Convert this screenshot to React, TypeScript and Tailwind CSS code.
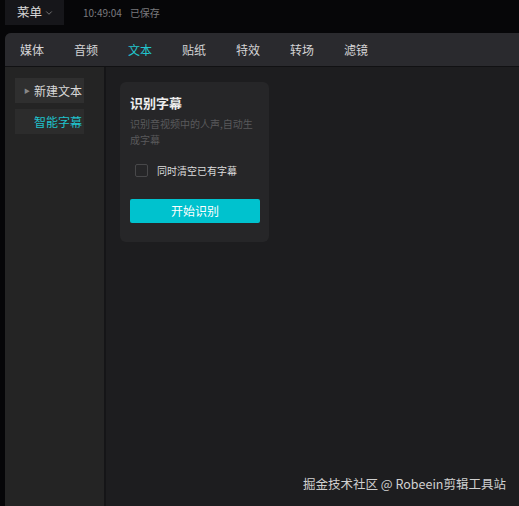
import { ChevronDown } from 'lucide-react';

const tabs = ['媒体', '音频', '文本', '贴纸', '特效', '转场', '滤镜'];

export default function App() {
  return (
    <div
      className="relative flex h-[506px] w-[519px] flex-col overflow-hidden bg-[#060608] text-white"
      style={{ fontFamily: '"Noto Sans CJK SC", "Noto Sans", sans-serif' }}
    >
      {/* Top bar */}
      <div className="flex h-[25px] items-center">
        <div className="ml-[5px] flex h-full w-[59px] items-center gap-[2px] bg-[#16161a] pl-[12px] text-[12.5px] text-[#d8d8d8]">
          菜单
          <ChevronDown size={10} strokeWidth={1.5} className="text-[#aaa]" />
        </div>
        <span className="ml-[19px] text-[10px] text-[#7a7a7e]">10:49:04</span>
        <span className="ml-[8px] text-[10px] text-[#7a7a7e]">已保存</span>
      </div>

      {/* Main panel */}
      <div className="ml-[5px] mt-[8px] flex flex-1 flex-col overflow-hidden rounded-tl-[6px] bg-[#1d1d1f]">
        <div className="flex h-[34px] items-center gap-[30px] border-b border-[#111113] bg-[#2a2a2e] pl-[15px] text-[12px] text-[#d4d4d6]">
          {tabs.map((t) => (
            <span key={t} className={t === '文本' ? 'text-[#22c6cf]' : ''}>
              {t}
            </span>
          ))}
        </div>

        <div className="flex flex-1">
          {/* Sidebar */}
          <div className="flex w-[101px] flex-col gap-[6px] border-r-2 border-[#151517] bg-[#242424] pl-[10px] pt-[11px]">
            <div className="flex h-[25px] w-[69px] items-center bg-[#2f2f2f] text-[12px] text-[#d8d8d8]">
              <span className="ml-[9px] mr-[4px] text-[6px] text-[#888]">▶</span>
              新建文本
            </div>
            <div className="flex h-[25px] w-[69px] items-center bg-[#2c2c2c] pl-[19px] text-[12px] text-[#1fc3cc]">
              智能字幕
            </div>
          </div>

          {/* Content */}
          <div className="flex-1 pl-[14px] pt-[15px]">
            <div className="flex h-[160px] w-[149px] flex-col rounded-[6px] bg-[#262628] px-[10px] pt-[12px]">
              <div className="text-[13px] font-bold leading-[18px] text-[#eeeeee]">识别字幕</div>
              <div className="mt-[4px] text-[10px] leading-[16px] text-[#59595b]">
                识别音视频中的人声,自动生成字幕
              </div>
              <label className="mt-[15px] flex items-center gap-[9px] pl-[5px] text-[10px] text-[#dcdcdc]">
                <span className="block h-[13px] w-[13px] rounded-[2px] border border-[#48484a] bg-[#262628]" />
                同时清空已有字幕
              </label>
              <button className="mt-[21px] h-[24px] w-[130px] rounded-[2px] bg-[#00c2ce] text-[12px] text-white">
                开始识别
              </button>
            </div>
          </div>
        </div>
      </div>

      <div className="absolute bottom-[12px] right-[13px] text-[12.5px] text-[#d0d0d0]">
        掘金技术社区 @ Robeein剪辑工具站
      </div>
    </div>
  );
}
